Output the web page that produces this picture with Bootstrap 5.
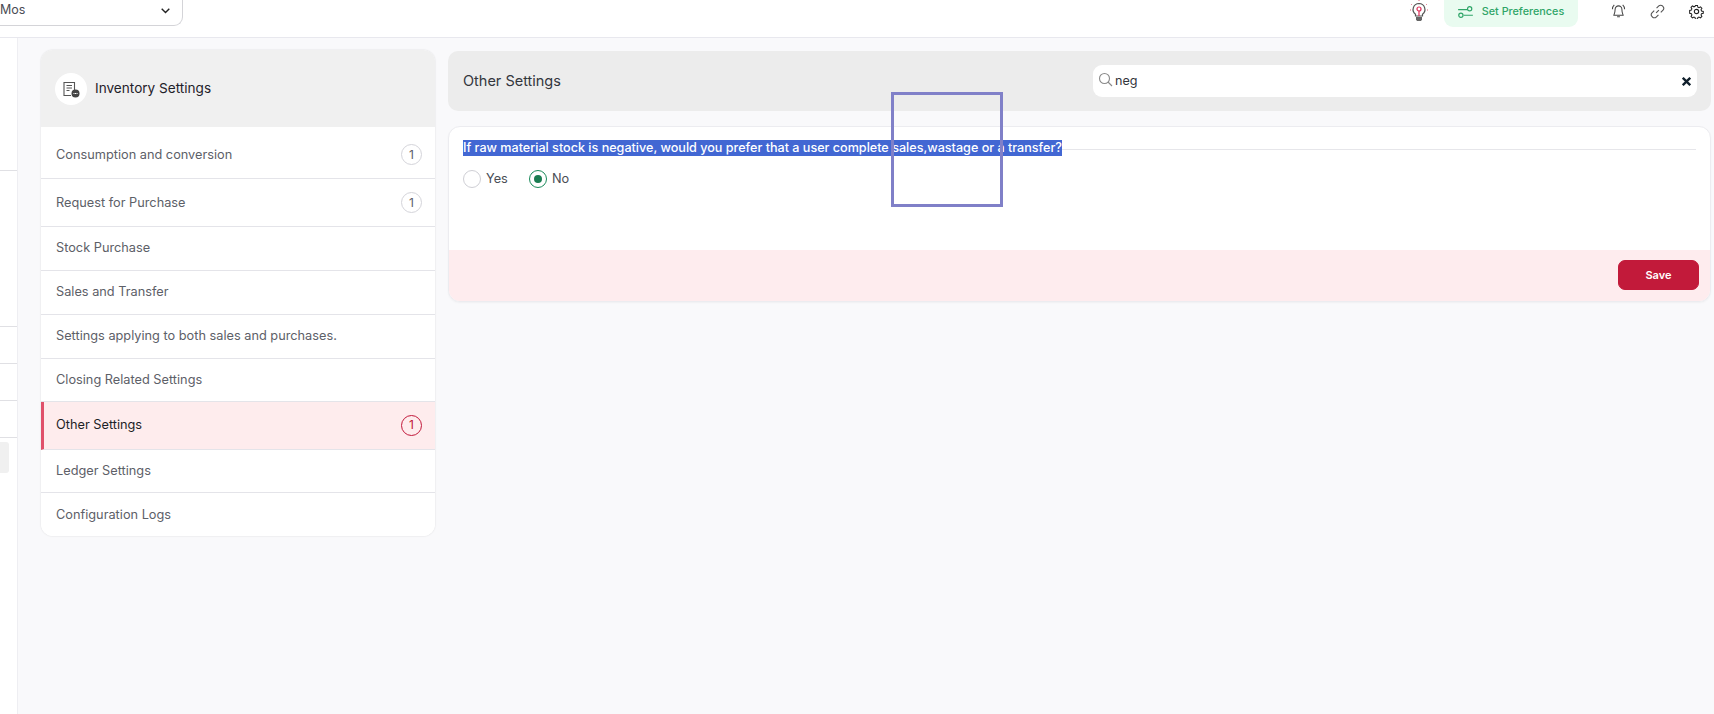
<!DOCTYPE html>
<html lang="en">
<head>
<meta charset="utf-8">
<title>Inventory Settings</title>
<link href="https://cdn.jsdelivr.net/npm/bootstrap@5.3.0/dist/css/bootstrap.min.css" rel="stylesheet">
<style>
html,body{height:100%;overflow:hidden}
body{font-family:Inter,"Liberation Sans",sans-serif;background:#f9f9fb;color:#1f2430;font-size:13px}
.shell{height:714px}
.topbar{height:38px;background:#fff;border-bottom:1px solid #e8e8ee;flex:none}
.mod-select{width:183px;height:27px;margin-top:-1px;padding:0 12px 3px 0;border:1px solid #d4d4d8;border-top:0;border-left:0;border-radius:0 0 9px 0;color:#4a4d55;font-size:12.5px}
.pref-pill{width:134px;height:27px;padding-bottom:3px;margin-right:33px;margin-left:15px;background:#e9fbf0;color:#2fa568;border-radius:0 0 9px 9px;font-size:10.8px;font-weight:500;gap:9px}
.top-icons{gap:24px;padding-right:10px}
.side-strip{width:18px;flex:none;background:#fff;border-right:1px solid #eeeef2}
.strip-a{height:133px;border-bottom:1px solid #e0e0e4}
.strip-b{height:156px;border-bottom:1px solid #e0e0e4}
.strip-c{height:37px;border-bottom:1px solid #e0e0e4}
.strip-box{width:9px;height:31px;margin-top:4px;background:#f0f0f0;border-radius:0 3px 3px 0}
.main-area{padding:12px 3px 0 23px;gap:13px}
.side-card{width:394px;height:486px;flex:none;border-radius:12px;overflow:hidden;background:#fff;box-shadow:0 0 2px rgba(0,0,0,.14)}
.side-head{height:77px;background:#f0f0f0;padding-left:14px;gap:8px;font-size:13.6px;font-weight:400;color:#1f222a}
.head-ico{width:32px;height:32px;background:#fff;border-radius:50%}
.menu-list{padding-top:4px}
.menu-row{height:48px;padding:0 13px 0 15px;border:0;border-bottom:1px solid #e4e4e9;border-radius:0!important;color:#5d6068;font-size:12.75px;font-weight:400;background:#fff}
.h44{height:44px;padding-bottom:2px}
.h48{height:48px}
.h43{height:43px}
.menu-row.is-on{background:#feeced;color:#1c1f27;border-left:3px solid #e0506a;padding-left:12px;padding-bottom:1px}
.menu-row:last-child{border-bottom:0}
.num-dot{width:21px;height:21px;border:1px solid #d4d4da;border-radius:50%;font-size:12px;color:#5d6068;background:#fff}
.is-on .num-dot{border-color:#c2183a;color:#c2183a;background:transparent}
.right-col{margin-top:1px;gap:15px;min-width:0}
.right-head{height:60px;background:#ececec;border-radius:10px;padding:0 14px 0 15px;font-size:14.5px;color:#33363d}
.search-box{width:604px;height:32px;background:#fff;border-radius:9px;padding:0 6px 0 5px;gap:2px;font-size:12.6px;color:#33363d}
.search-glass{margin-top:-4px}
.search-term{margin-top:1px}
.set-card{height:176px;background:#fff;border:1px solid #ececf0;border-radius:12px;overflow:hidden;box-shadow:0 1px 2px rgba(0,0,0,.04)}
.set-body{padding:13px 14px 0 14px;height:123px}
.q-line{height:16px}
.q-text{background:#4267d3;color:#fff;font-size:12.6px;font-weight:500;line-height:16px;white-space:nowrap}
.q-rule{height:1px;background:#e6e6ea;margin-top:2px}
.radio-row{margin-top:14px;font-size:12.75px;color:#4a4d55;height:18px}
.radio-dot{width:18px;height:18px;border:1px solid #cfcfd5;border-radius:50%;background:#fff;margin-right:5px}
.radio-dot.is-set{border-color:#1a8a5a}
.radio-dot.is-set::after{content:"";width:8px;height:8px;border-radius:50%;background:#1a7d52}
.yes-wrap{width:66px}
.set-foot{height:51px;background:#feecee;padding:0 11px 1px 0}
.save-btn{width:81px;height:30px;padding:0;background:#c21a3a;border:1px solid #c21a3a;border-radius:7px;color:#fff;font-size:11px;font-weight:600}
.annot-box{position:absolute;left:891px;top:92px;width:112px;height:115px;border:3px solid #8080c8;pointer-events:none}
</style>
</head>
<body>
<div class="shell d-flex flex-column position-relative">
  <header class="topbar d-flex align-items-start justify-content-between">
    <div class="mod-select d-flex align-items-center justify-content-between">
      <span>Mos</span>
      <svg width="9" height="6" viewBox="0 0 9 6"><path d="M.7.700l3.800 3.800L8.300.700" fill="none" stroke="#222" stroke-width="1.400"/></svg>
    </div>
    <div class="d-flex align-items-start">
      <svg width="20" height="24" viewBox="0 0 20 24">
        <g stroke="#e0607a" stroke-width="1" stroke-dasharray="1 1"><path d="M2 4l1 1M18 4l-1 1M10 0v2M1 10h1M18 10h1"/></g>
        <path d="M10 3.500a6 6 0 0 0-3.500 10.800V16h7v-1.700A6 6 0 0 0 10 3.500z" fill="#fff" stroke="#555" stroke-width="1.200"/>
        <circle cx="10" cy="9" r="2" fill="none" stroke="#e0305a" stroke-width="1.200"/>
        <path d="M10 11v5" stroke="#e0305a" stroke-width="1.200"/>
        <path d="M7 17h6v2.500l-1 1.500H8l-1-1.500z" fill="#666"/>
      </svg>
      <div class="pref-pill d-flex align-items-center justify-content-center">
        <svg width="15" height="12" viewBox="0 0 16 13" fill="none" stroke="#2fa568" stroke-width="1.300"><path d="M0 4h10M6 10h10"/><circle cx="12.500" cy="3" r="2.300"/><circle cx="3" cy="10" r="2.300"/></svg>
        <span>Set Preferences</span>
      </div>
      <div class="top-icons d-flex align-items-center pt-1">
        <svg width="15" height="15" viewBox="0 0 16 16" fill="none" stroke="#444" stroke-width="1.100"><path d="M8 2a3.600 3.600 0 0 0-3.600 3.600c0 4-1.400 5.900-1.400 6.400h10c0-.5-1.400-2.400-1.400-6.400A3.600 3.600 0 0 0 8 2zM6.500 13.500h3M1.500 5.500C1.500 3.500 2.500 2 3.500 1M14.500 5.500C14.500 3.500 13.500 2 12.500 1"/></svg>
        <svg width="15" height="15" viewBox="0 0 16 16" fill="none" stroke="#555" stroke-width="1.200"><path d="M6.500 9.500l3-3M7 4.500l2.400-2.400a2.700 2.700 0 0 1 3.900 0l.6.600a2.700 2.700 0 0 1 0 3.900L11.500 9M9 11.500l-2.400 2.400a2.700 2.700 0 0 1-3.900 0l-.6-.6a2.700 2.700 0 0 1 0-3.900L4.500 7"/></svg>
        <svg width="15" height="15" viewBox="0 0 16 16" fill="none" stroke="#222" stroke-width="1.200"><circle cx="8" cy="8" r="2.300"/><path d="M6.800 1h2.400l.4 2 1.300.6 1.800-1 1.600 1.700-1 1.700.6 1.400 2 .5v2.200l-2 .5-.6 1.400 1 1.700-1.600 1.700-1.800-1-1.300.6-.4 2H6.800l-.4-2-1.300-.6-1.800 1-1.600-1.700 1-1.700-.6-1.400-2-.5V6.900l2-.5.6-1.400-1-1.700L3.300 1.600l1.800 1 1.300-.6z" transform="translate(.6 .6) scale(.92)"/></svg>
      </div>
    </div>
  </header>
  <div class="d-flex flex-grow-1">
    <aside class="side-strip">
      <div class="strip-a"></div>
      <div class="strip-b"></div>
      <div class="strip-c"></div>
      <div class="strip-c"></div>
      <div class="strip-c"></div>
      <div class="strip-box"></div>
    </aside>
    <main class="main-area d-flex flex-grow-1 align-items-start">
      <section class="side-card">
        <div class="side-head d-flex align-items-center">
          <span class="head-ico d-flex align-items-center justify-content-center">
            <svg width="18" height="18" viewBox="0 0 18 18" fill="none"><path d="M12.500 10V2.500H2v13h7" stroke="#555" stroke-width="1.100"/><path d="M4.500 5.500h5.500M4.500 8h5.500M4.500 10.500h3" stroke="#555" stroke-width="1"/><circle cx="13.500" cy="13.500" r="4" fill="#444"/><path d="M11.500 13.500h4" stroke="#fff" stroke-width="1" stroke-dasharray="1 .5"/></svg>
          </span>
          <span>Inventory Settings</span>
        </div>
        <div class="list-group list-group-flush menu-list">
          <div class="list-group-item menu-row d-flex align-items-center justify-content-between"><span>Consumption and conversion</span><span class="num-dot d-flex align-items-center justify-content-center">1</span></div>
          <div class="list-group-item menu-row d-flex align-items-center justify-content-between"><span>Request for Purchase</span><span class="num-dot d-flex align-items-center justify-content-center">1</span></div>
          <div class="list-group-item menu-row h44 d-flex align-items-center">Stock Purchase</div>
          <div class="list-group-item menu-row h44 d-flex align-items-center">Sales and Transfer</div>
          <div class="list-group-item menu-row h44 d-flex align-items-center">Settings applying to both sales and purchases.</div>
          <div class="list-group-item menu-row h43 d-flex align-items-center">Closing Related Settings</div>
          <div class="list-group-item menu-row h48 is-on d-flex align-items-center justify-content-between"><span>Other Settings</span><span class="num-dot d-flex align-items-center justify-content-center">1</span></div>
          <div class="list-group-item menu-row h43 d-flex align-items-center">Ledger Settings</div>
          <div class="list-group-item menu-row h43 d-flex align-items-center">Configuration Logs</div>
        </div>
      </section>
      <section class="right-col d-flex flex-column flex-grow-1">
        <div class="right-head d-flex align-items-center justify-content-between">
          <span>Other Settings</span>
          <div class="search-box d-flex align-items-center">
            <svg class="search-glass" width="15" height="15" viewBox="0 0 15 15" fill="none" stroke="#8a8a8a" stroke-width="1.100"><circle cx="6.500" cy="6.500" r="5"/><path d="M10 10l4 4"/></svg>
            <span class="search-term flex-grow-1">neg</span>
            <svg width="9" height="9" viewBox="0 0 9 9" fill="none" stroke="#10202c" stroke-width="2.300"><path d="M.8.800l7.400 7.400M8.200.800L.8 8.200"/></svg>
          </div>
        </div>
        <div class="set-card">
          <div class="set-body">
            <div class="q-line d-flex align-items-center">
              <span class="q-text">If raw material stock is negative, would you prefer that a user complete sales,wastage or a transfer?</span>
              <span class="q-rule flex-grow-1"></span>
            </div>
            <div class="radio-row d-flex align-items-center">
              <div class="yes-wrap d-flex align-items-center"><span class="radio-dot"></span><span>Yes</span></div>
              <div class="d-flex align-items-center"><span class="radio-dot is-set d-flex align-items-center justify-content-center"></span><span>No</span></div>
            </div>
          </div>
          <div class="set-foot d-flex align-items-center justify-content-end">
            <button type="button" class="btn save-btn">Save</button>
          </div>
        </div>
      </section>
    </main>
  </div>
  <div class="annot-box"></div>
</div>
</body>
</html>
